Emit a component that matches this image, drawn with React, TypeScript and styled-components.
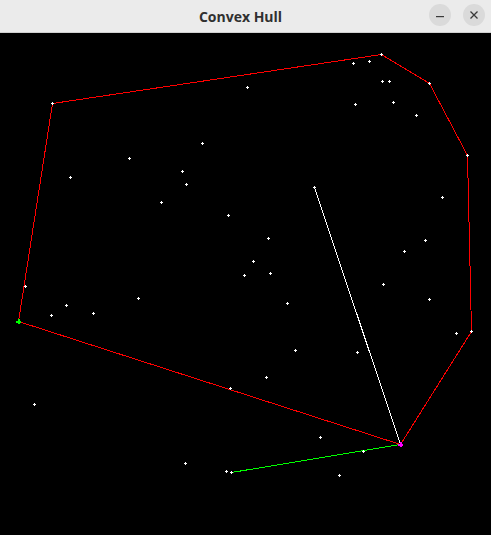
import React from "react";
import styled, { createGlobalStyle } from "styled-components";

const Global = createGlobalStyle`
  html, body { margin: 0; padding: 0; background: #000; }
  body { width: 491px; height: 535px; overflow: hidden; }
`;

const Window = styled.div`
  display: flex;
  flex-direction: column;
  width: 491px;
  height: 535px;
  background: #000;
`;

const TitleBar = styled.header`
  display: grid;
  grid-template-columns: 1fr auto 1fr;
  align-items: center;
  height: 32px;
  background: #ebebeb;
  border-bottom: 1px solid #cfcfcf;
  padding: 0 6px 0 0;
  box-sizing: content-box;
`;

const Title = styled.h1`
  grid-column: 2;
  margin: 0 4px 0 0;
  font-family: "Open Sans", "Noto Sans", sans-serif;
  font-weight: 700;
  font-size: 14px;
  color: #303030;
  letter-spacing: 0;
`;

const Controls = styled.div`
  grid-column: 3;
  justify-self: end;
  display: flex;
  gap: 12px;
  margin-top: -2px;
`;

const RoundButton = styled.button`
  width: 22px;
  height: 22px;
  border-radius: 50%;
  border: none;
  padding: 0;
  background: #dadada;
  display: flex;
  align-items: center;
  justify-content: center;
  color: #3a3a3a;
`;

const Canvas = styled.svg`
  display: block;
  flex: 1;
  width: 491px;
  background: #000;
`;

const points: [number, number][] = [
  [247, 87], [202, 143], [129, 158], [70, 177], [182, 171], [186, 184], [161, 202],
  [353, 63], [369, 61], [382, 81], [389, 81], [355, 104], [393, 102], [416, 115], [442, 197],
  [314, 187], [228, 215], [244, 275], [25, 286], [138, 298], [66, 305], [93, 313], [51, 315],
  [268, 238], [253, 261], [270, 273], [287, 303], [295, 350], [357, 352], [383, 284],
  [404, 251], [425, 240], [429, 299], [456, 333],
  [230, 388], [34, 404], [185, 463], [226, 471], [231, 472], [266, 377], [320, 437],
  [363, 451], [339, 475],
  [52, 103], [381, 54], [429, 83], [467, 155], [471, 331],
];

const hull: [number, number][] = [
  [52, 103], [381, 54], [429, 83], [467, 155], [471, 331], [400, 444], [18, 321],
];

function Plus({ x, y, color, size = 1 }: { x: number; y: number; color: string; size?: number }) {
  const arm = size === 1 ? 1 : 2;
  const t = size === 1 ? 1 : 2;
  const off = size === 1 ? 0 : 0;
  return (
    <g fill={color} shapeRendering="crispEdges">
      <rect x={x - arm + off} y={y + off} width={arm * 2 + (size === 1 ? 1 : 1)} height={t} />
      <rect x={x + off} y={y - arm + off} width={t} height={arm * 2 + 1} />
    </g>
  );
}

function Seg({ a, b, color }: { a: [number, number]; b: [number, number]; color: string }) {
  return (
    <line
      x1={a[0] + 0.5}
      y1={a[1] + 0.5}
      x2={b[0] + 0.5}
      y2={b[1] + 0.5}
      stroke={color}
      strokeWidth={1}
      shapeRendering="crispEdges"
    />
  );
}

export default function App() {
  return (
    <>
      <Global />
      <Window>
        <TitleBar>
          <Title>Convex Hull</Title>
          <Controls>
            <RoundButton aria-label="Minimize">
              <svg width="10" height="10" viewBox="0 0 10 10">
                <rect x="1" y="6" width="8" height="1.2" fill="#3a3a3a" />
              </svg>
            </RoundButton>
            <RoundButton aria-label="Close">
              <svg width="10" height="10" viewBox="0 0 10 10">
                <path d="M1.5 1.5 L8.5 8.5 M8.5 1.5 L1.5 8.5" stroke="#3a3a3a" strokeWidth="1.3" />
              </svg>
            </RoundButton>
          </Controls>
        </TitleBar>
        <Canvas viewBox="0 33 491 502" width={491} height={502}>
          {hull.map((p, i) => (
            <Seg key={i} a={p} b={hull[(i + 1) % hull.length]} color="#ff0000" />
          ))}
          <Seg a={[314, 187]} b={[400, 444]} color="#ffffff" />
          <Seg a={[231, 472]} b={[400, 444]} color="#00ff00" />
          {points.map(([x, y], i) => (
            <Plus key={i} x={x} y={y} color="#ffffff" />
          ))}
          <Plus x={18} y={321} color="#00ff00" size={2} />
          <Plus x={400} y={444} color="#ff00ff" size={2} />
        </Canvas>
      </Window>
    </>
  );
}
